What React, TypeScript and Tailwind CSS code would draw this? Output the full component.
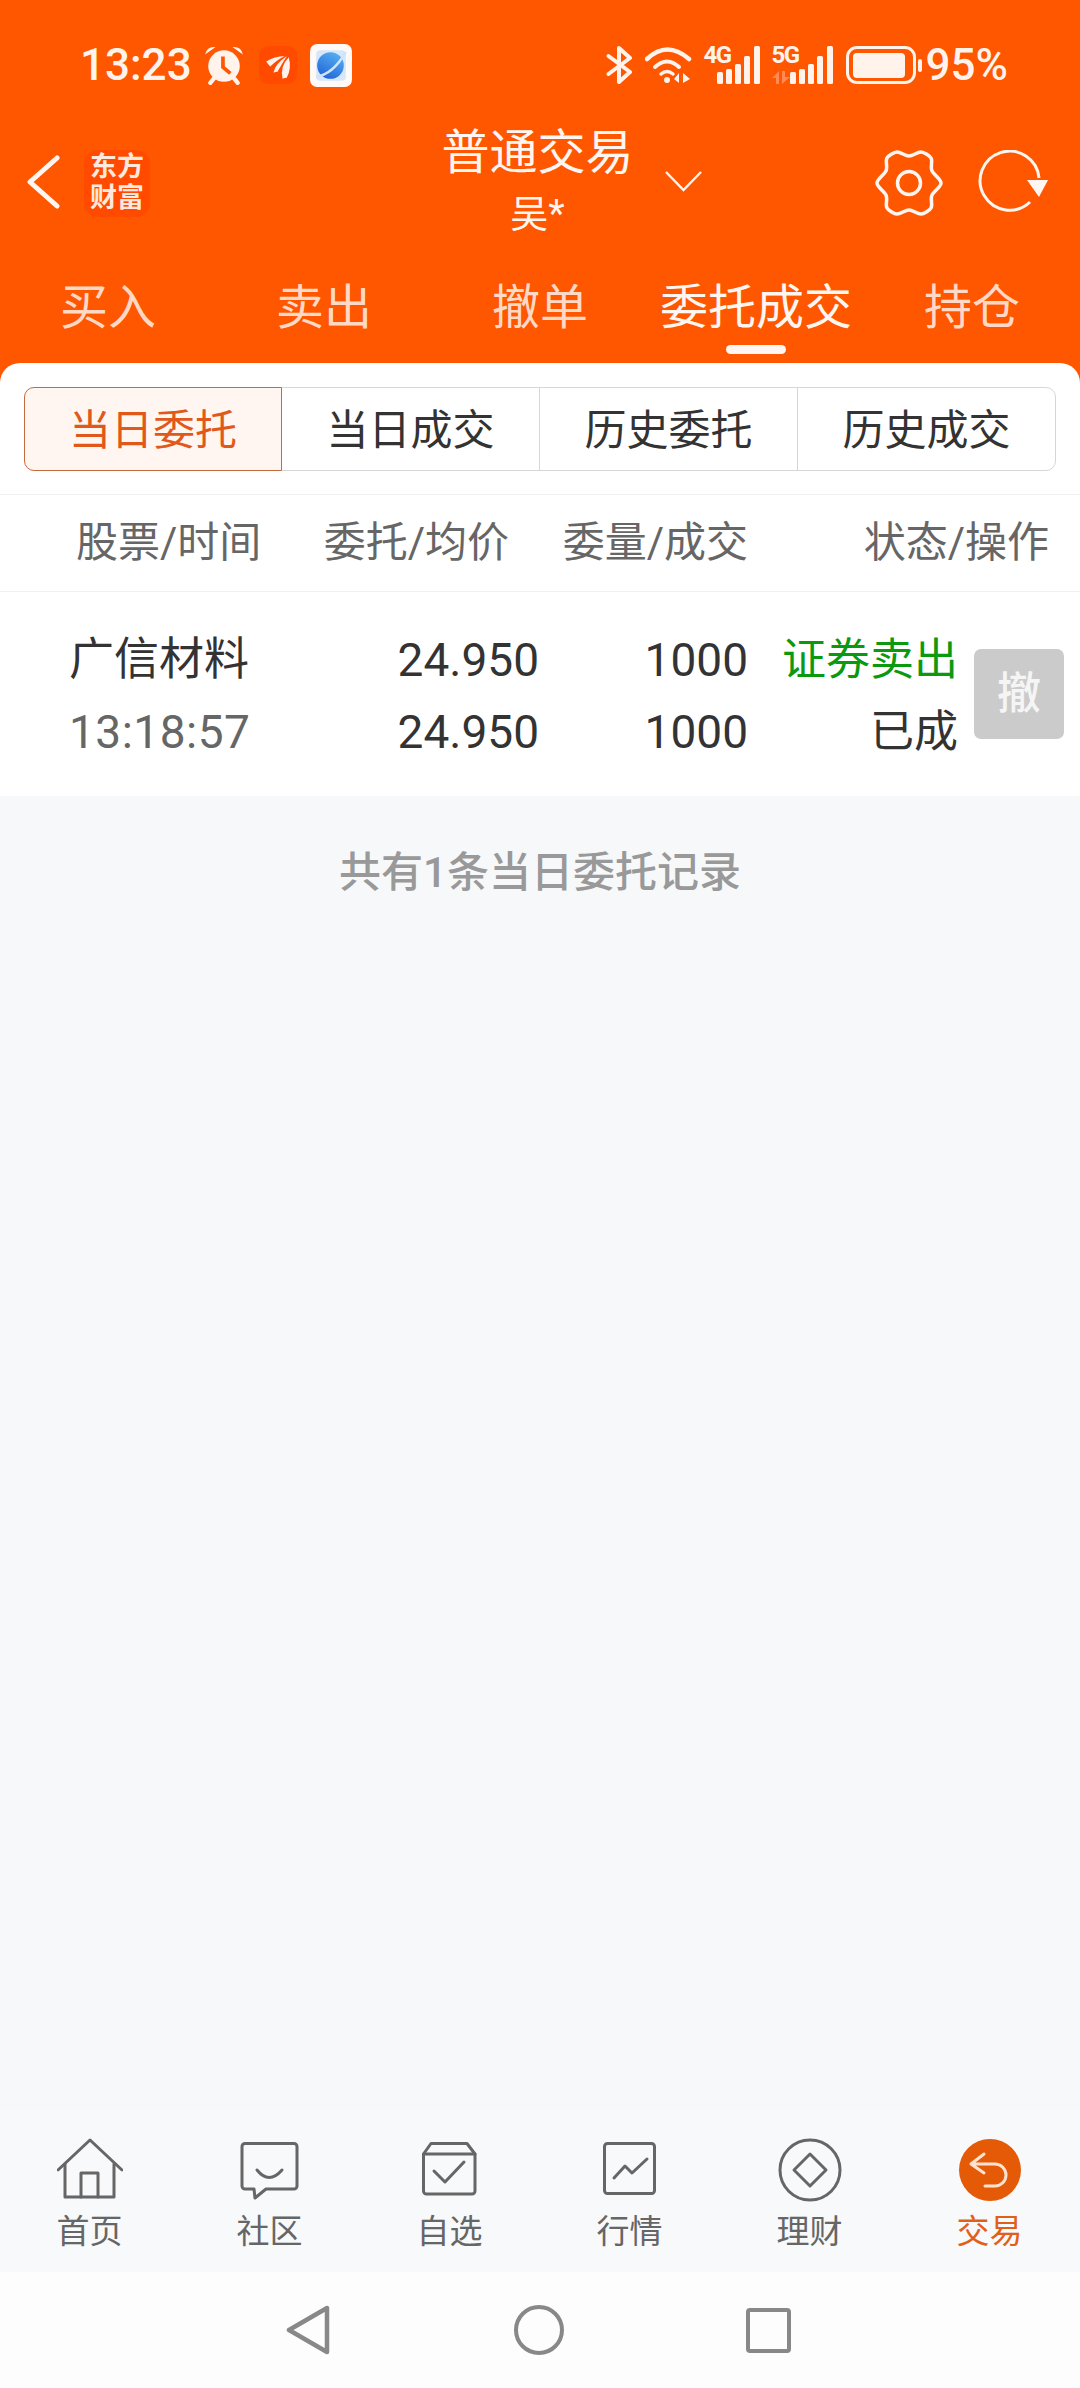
import type { ReactNode } from "react";

const mainTabs = ["买入", "卖出", "撤单", "委托成交", "持仓"];
const segments = ["当日委托", "当日成交", "历史委托", "历史成交"];

function Bars() {
  return (
    <svg width="43" height="38" viewBox="0 0 43 38" fill="#fff3ec">
      <rect x="0" y="26" width="6" height="12" rx="1.5" />
      <rect x="9" y="23" width="6" height="15" rx="1.5" />
      <rect x="18" y="18" width="6" height="20" rx="1.5" />
      <rect x="27" y="10" width="6" height="28" rx="1.5" />
      <rect x="37" y="0" width="6" height="38" rx="1.5" />
    </svg>
  );
}

function StatusBar() {
  return (
    <div className="flex h-[130px] items-center pl-[80px] text-[#fff3ec]">
      <span className="text-[44px] font-medium leading-none">13:23</span>
      {/* alarm */}
      <svg className="ml-[12px]" width="40" height="40" viewBox="0 0 38 38">
        <circle cx="19" cy="20" r="15" fill="#fff3ec" />
        <path d="M1 9 Q3 1 11 2 Z M37 9 Q35 1 27 2 Z" fill="#fff3ec" />
        <path d="M6 36 L10 31 M32 36 L28 31" stroke="#fff3ec" strokeWidth="4" strokeLinecap="round" />
        <path d="M18 11 V21 L25 27" stroke="#ff5600" strokeWidth="3.5" fill="none" />
      </svg>
      {/* feather app */}
      <svg className="ml-[15px]" width="38" height="38" viewBox="0 0 37 37">
        <rect width="37" height="37" rx="9" fill="#ff4a00" />
        <path d="M7 15 Q15 10 25 10 Q18 13 11 20 Q9 18 7 15Z" fill="#fff3ec" />
        <path d="M14 26 Q16 17 27 10 Q22 18 18 25 Q16 25 14 26Z" fill="#fff3ec" />
        <path d="M23 32 Q20 20 29 11 Q32 22 27 31 Q25 31 23 32Z" fill="#fff3ec" />
      </svg>
      {/* browser */}
      <svg className="ml-[13px]" width="42" height="43" viewBox="0 0 41 42">
        <defs>
          <linearGradient id="planet" x1="0.7" y1="0" x2="0.2" y2="1">
            <stop offset="0" stopColor="#55aef0" />
            <stop offset="1" stopColor="#1f62d8" />
          </linearGradient>
        </defs>
        <rect width="41" height="42" rx="7" fill="#fffaf7" />
        <rect x="6" y="6" width="29" height="30" rx="4" fill="#d6e6fb" />
        <circle cx="20" cy="21" r="13" fill="url(#planet)" />
        <path d="M6 32 Q22 30 35 8" stroke="#cfe3fb" strokeWidth="2.5" fill="none" />
      </svg>

      <div className="ml-auto flex items-center pr-[72px]">
        {/* bluetooth */}
        <svg width="27" height="38" viewBox="0 0 27 38" fill="none" stroke="#fff3ec" strokeWidth="4" strokeLinejoin="round" strokeLinecap="round">
          <path d="M2.5 10 L24 26 L13 36 V2 L24 12 L2.5 28" />
        </svg>
        {/* wifi */}
        <svg className="ml-[12px]" width="47" height="38" viewBox="0 0 47 38" fill="none" stroke="#fff3ec" strokeLinecap="round">
          <path d="M2 13 Q22 -6 44 13" strokeWidth="4.5" />
          <path d="M10 21 Q22 10 34 21" strokeWidth="4" />
          <path d="M16 28 Q22 23 28 28" strokeWidth="3.5" />
          <circle cx="22" cy="34" r="3" fill="#fff3ec" stroke="none" />
          <path d="M34 27 V37 L29 33Z M38 27 V37 L45 33Z" fill="#fff3ec" stroke="none" />
        </svg>
        <div className="relative ml-[12px] h-[38px] w-[56px]">
          <span className="absolute left-0 top-0 text-[24px] font-bold leading-[18px] tracking-[-1.5px]">4G</span>
          <div className="absolute bottom-0 right-0 flex">
            <Bars />
          </div>
        </div>
        <div className="relative ml-[12px] h-[38px] w-[61px]">
          <span className="absolute left-0 top-0 text-[24px] font-bold leading-[18px] tracking-[-1.5px]">5G</span>
          <svg className="absolute bottom-0 left-0" width="18" height="13" viewBox="0 0 18 13" fill="#ff8a55">
            <path d="M7 0 V13 H4 V7 H0Z M10 0 H13 V6 H18 L10 13Z" />
          </svg>
          <div className="absolute bottom-0 right-0 flex">
            <Bars />
          </div>
        </div>
        {/* battery */}
        <div className="ml-[13px] flex h-[38px] w-[70px] items-center rounded-[11px] border-[3px] border-[#fff3ec] px-[4px]">
          <div className="h-[25px] w-[52px] rounded-[4px] bg-[#fff3ec]" />
        </div>
        <div className="ml-[2px] h-[13px] w-[4px] rounded-[2px] bg-[#fff3ec]" />
        <span className="ml-[4px] text-[44px] font-medium leading-none">95%</span>
      </div>
    </div>
  );
}

function TitleBar() {
  return (
    <div className="flex h-[106px] items-center pl-[27px] text-[#fff6f1]">
      <svg className="mb-[2px]" width="33" height="54" viewBox="0 0 33 54" fill="none" stroke="#fff6f1" strokeWidth="5" strokeLinecap="round" strokeLinejoin="round">
        <path d="M30 3 L3 27 L30 51" />
      </svg>
      <div className="ml-[24px] flex h-[67px] w-[66px] flex-col items-center justify-center rounded-[14px] bg-[#ff4a00] text-[27px] font-bold leading-[31px] text-[#ffe9df]">
        <span>东方</span>
        <span>财富</span>
      </div>
      <div className="ml-[293px] flex w-[189px] flex-col items-center whitespace-nowrap">
        <span className="text-[48px] leading-[62px]">普通交易</span>
        <span className="text-[38px] leading-[60px]">吴*</span>
      </div>
      <svg className="mb-[4px] ml-[33px]" width="37" height="21" viewBox="0 0 37 21" fill="none" stroke="#fff6f1" strokeWidth="2.5">
        <path d="M1 1 L18.5 19 L36 1" />
      </svg>
      {/* settings */}
      <svg className="ml-[173px]" width="68" height="66" viewBox="-34 -33 68 66" fill="none" stroke="#fff6f1" strokeWidth="3.5" strokeLinejoin="round">
        <path d="M0 -27 C4 -27 8 -31 12 -31 C15 -31 21 -27 22 -25 C24 -22 21 -16 23 -12 C25 -8 32 -4 32 0 C32 4 25 8 23 12 C21 16 24 22 22 25 C21 27 15 31 12 31 C8 31 4 27 0 27 C-4 27 -8 31 -12 31 C-15 31 -21 27 -22 25 C-24 22 -21 16 -23 12 C-25 8 -32 4 -32 0 C-32 -4 -25 -8 -23 -12 C-21 -16 -24 -22 -22 -25 C-21 -27 -15 -31 -12 -31 C-8 -31 -4 -27 0 -27Z" />
        <circle cx="0" cy="0" r="11.5" />
      </svg>
      {/* refresh */}
      <svg className="ml-[34px]" width="72" height="66" viewBox="0 0 72 66" fill="none">
        <path d="M53 52 A29.5 29.5 0 1 1 62 28" stroke="#fff6f1" strokeWidth="3" />
        <path d="M50 30 H71 L62 47Z" fill="#fff6f1" />
      </svg>
    </div>
  );
}

function Segments() {
  return (
    <div className="mx-[24px] mt-[24px] flex h-[84px] text-[42px] leading-none text-[#333]">
      {segments.map((s, i) => (
        <div
          key={s}
          className={
            i === 0
              ? "flex w-[258px] items-center justify-center rounded-l-[10px] border border-[#c56a3c] bg-[#fff6f1] pt-[3px] text-[#e0591a]"
              : i === 3
                ? "-ml-px flex flex-1 items-center justify-center rounded-r-[10px] border border-[#d6d6d6] pt-[3px]"
                : "flex flex-1 items-center justify-center border-y border-r border-[#d6d6d6] pt-[3px]"
          }
        >
          {s}
        </div>
      ))}
    </div>
  );
}

function OrderTable() {
  return (
    <>
      <div className="mt-[23px] flex h-[98px] items-center whitespace-nowrap border-y border-[#f0f0f0] pl-[76px] text-[42px] leading-none text-[#666]">
        <div className="w-[182px]">股票/时间</div>
        <div className="w-[251px] text-right">委托/均价</div>
        <div className="w-[239px] text-right">委量/成交</div>
        <div className="w-[301px] text-right">状态/操作</div>
      </div>
      <div className="flex h-[204px] items-center whitespace-nowrap pl-[69px] pt-[3px] text-[46px] leading-[72px] text-[#333]">
        <div className="w-[200px]">
          <div className="text-[45px]">广信材料</div>
          <div className="tracking-[0.5px] text-[#666]">13:18:57</div>
        </div>
        <div className="w-[270px] text-right">
          <div>24.950</div>
          <div>24.950</div>
        </div>
        <div className="w-[209px] text-right">
          <div>1000</div>
          <div>1000</div>
        </div>
        <div className="w-[210px] text-right text-[44px]">
          <div className="text-[#0a990f]">证券卖出</div>
          <div>已成</div>
        </div>
        <div className="-mt-[3px] ml-[16px] flex h-[90px] w-[90px] items-center justify-center rounded-[7px] bg-[#cbcbcb] text-[44px] font-medium text-[#f5f5f5]">撤</div>
      </div>
    </>
  );
}

const navStroke = { fill: "none", stroke: "#666", strokeWidth: 3, strokeLinejoin: "round", strokeLinecap: "round" } as const;

const navItems: { label: string; icon: ReactNode }[] = [
  {
    label: "首页",
    icon: (
      <g {...navStroke}>
        <path d="M1 32 L33 2 L65 32" />
        <path d="M8 26 V59 H57 V26" />
        <path d="M24 59 V35 H41 V59" />
      </g>
    ),
  },
  {
    label: "社区",
    icon: (
      <g {...navStroke}>
        <path d="M8 5.5 H57 a3 3 0 0 1 3 3 V48 a3 3 0 0 1 -3 3 H29 L18 60 L17 51 H8 a3 3 0 0 1 -3 -3 V8.5 a3 3 0 0 1 3 -3Z" />
        <path d="M20 32 Q32 47 45 32" />
      </g>
    ),
  },
  {
    label: "自选",
    icon: (
      <g {...navStroke}>
        <path d="M6.5 16 H58 V53 a3 3 0 0 1 -3 3 H9.5 a3 3 0 0 1 -3 -3Z" />
        <path d="M6.5 16 L14 5.5 H50 L58 16" />
        <path d="M17 33 L28 44 L47 24" />
      </g>
    ),
  },
  {
    label: "行情",
    icon: (
      <g {...navStroke}>
        <rect x="7.5" y="5.5" width="50" height="50" rx="3" />
        <path d="M17 40 L28 28 L35 35 L50 21" />
      </g>
    ),
  },
  {
    label: "理财",
    icon: (
      <g {...navStroke}>
        <circle cx="33" cy="32" r="30" />
        <path d="M33 16 L49 32 L33 48 L17 32Z" />
      </g>
    ),
  },
  {
    label: "交易",
    icon: (
      <>
        <circle cx="33" cy="32" r="31" fill="#e55a06" />
        <path d="M27 16 L14 26 L27 35 M15 26 H38 A11 11 0 0 1 38 48 H28" fill="none" stroke="#ffe3d0" strokeWidth="3" strokeLinecap="round" strokeLinejoin="round" />
      </>
    ),
  },
];

function TabBar() {
  return (
    <div className="flex h-[162px] bg-[#f8f9fb]">
      {navItems.map((item) => (
        <div key={item.label} className="flex w-[180px] flex-col items-center pt-[28px]">
          <svg className="-ml-px" width="66" height="64" viewBox="0 0 66 64">
            {item.icon}
          </svg>
          <span className={item.label === "交易" ? "-ml-px mt-[10px] text-[33px] leading-[40px] text-[#e0601a]" : "-ml-px mt-[10px] text-[33px] leading-[40px] text-[#666]"}>
            {item.label}
          </span>
        </div>
      ))}
    </div>
  );
}

function SystemNav() {
  return (
    <div className="flex h-[116px] items-center bg-[#fdfdfd] pl-[286px]">
      <svg width="44" height="50" viewBox="0 0 44 50" fill="none" stroke="#888" strokeWidth="4.5" strokeLinejoin="round">
        <path d="M41 3 V47 L3 25Z" />
      </svg>
      <div className="ml-[184px] h-[50px] w-[50px] rounded-full border-[4.5px] border-[#888]" />
      <div className="ml-[182px] h-[45px] w-[45px] rounded-[4px] border-[4.5px] border-[#888]" />
    </div>
  );
}

export default function App() {
  return (
    <div className="flex h-[2388px] w-[1080px] flex-col overflow-hidden bg-[#f7f8fa] [font-family:Roboto,'Noto_Sans_CJK_SC',sans-serif]">
      <div className="bg-[#ff5600]">
        <StatusBar />
        <TitleBar />
        {/* main tabs */}
        <div className="flex h-[127px] text-[48px] leading-none text-[#ffd9c6]">
          {mainTabs.map((t) => (
            <div key={t} className="relative flex w-[216px] justify-center pt-[48px]">
              <span className={t === "委托成交" ? "text-[#fff6f1]" : ""}>{t}</span>
              {t === "委托成交" && <div className="absolute bottom-[9px] left-1/2 h-[9px] w-[60px] -translate-x-1/2 rounded-full bg-[#fff6f1]" />}
            </div>
          ))}
        </div>
        <div className="overflow-hidden rounded-t-[20px] bg-white">
          <Segments />
          <OrderTable />
        </div>
      </div>
      <div className="flex-1 pt-[47px] text-center text-[42px] font-medium leading-[60px] text-[#999]">共有1条当日委托记录</div>
      <TabBar />
      <SystemNav />
    </div>
  );
}
